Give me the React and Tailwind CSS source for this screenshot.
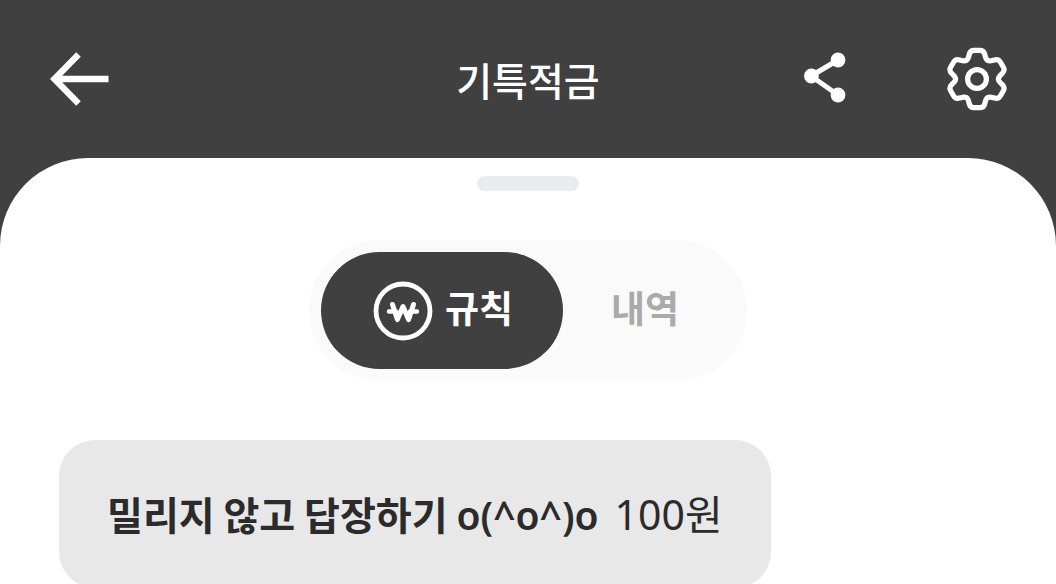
import React, { useState } from "react";

const tabs = [
  { id: "rules", label: "규칙" },
  { id: "history", label: "내역" },
];

const rules = [
  { id: 1, title: "밀리지 않고 답장하기", face: "o(^o^)o", amount: "100원" },
];

// Outline of a six tooth gear around 0,0 with rounded corners
const buildGearPath = () => {
  const tooth = [
    [-9, -19.5],
    [-6.8, -28.7],
    [6.8, -28.7],
    [9, -19.5],
  ];
  const points = [];
  for (let i = 0; i < 6; i++) {
    const a = (i * Math.PI) / 3;
    tooth.forEach(([x, y]) => {
      points.push([
        x * Math.cos(a) - y * Math.sin(a),
        x * Math.sin(a) + y * Math.cos(a),
      ]);
    });
  }
  const toward = ([x1, y1], [x2, y2], max) => {
    const len = Math.hypot(x2 - x1, y2 - y1);
    const t = Math.min(max, len / 2) / len;
    return `${(x1 + (x2 - x1) * t).toFixed(2)} ${(y1 + (y2 - y1) * t).toFixed(2)}`;
  };
  const parts = points.map((p, i) => {
    const prev = points[(i + points.length - 1) % points.length];
    const next = points[(i + 1) % points.length];
    return `${i === 0 ? "M" : "L"}${toward(p, prev, 4)} Q${p[0].toFixed(2)} ${p[1].toFixed(2)} ${toward(p, next, 4)}`;
  });
  return `${parts.join(" ")} Z`;
};

const gearPath = buildGearPath();

const BackIcon = () => (
  <svg width="60" height="56" viewBox="0 0 60 56" fill="none" aria-hidden="true">
    <path
      d="M29.5 3.5L5.5 28L29.5 52.5M6 28H59.5"
      stroke="currentColor"
      strokeWidth="6.4"
    />
  </svg>
);

const ShareIcon = () => (
  <svg width="42" height="56" viewBox="0 0 42 56" fill="none" aria-hidden="true">
    <path d="M34 9L7 25L34 44" stroke="currentColor" strokeWidth="5" />
    <circle cx="34" cy="9" r="7.4" fill="currentColor" />
    <circle cx="7.4" cy="25" r="7.4" fill="currentColor" />
    <circle cx="34" cy="44" r="7.4" fill="currentColor" />
  </svg>
);

const SettingsIcon = () => (
  <svg
    width="60"
    height="64"
    viewBox="-30 -32 60 64"
    fill="none"
    stroke="currentColor"
    strokeWidth="5.2"
    aria-hidden="true"
  >
    <path d={gearPath} strokeLinejoin="round" />
    <circle r="9.4" />
  </svg>
);

const WonIcon = () => (
  <svg
    width="60"
    height="60"
    viewBox="-30 -30 60 60"
    fill="none"
    stroke="currentColor"
    strokeLinecap="round"
    strokeLinejoin="round"
    aria-hidden="true"
  >
    <circle r="27" strokeWidth="4.8" />
    <path d="M-10.5 -6.5L-5.6 8.6L0 -4.5L5.6 8.6L10.5 -6.5" strokeWidth="5" />
    <path d="M-14 0.5H-7M7 0.5H14" strokeWidth="4.4" />
  </svg>
);

const Header = () => (
  <header className="grid grid-cols-[1fr_auto_1fr] items-center px-[49px] h-[158px] text-white">
    <button type="button" aria-label="뒤로" className="justify-self-start">
      <BackIcon />
    </button>
    <h1 className="text-[39px] leading-[56px] font-medium">기특적금</h1>
    <div className="flex items-center justify-self-end gap-[101px]">
      <button type="button" aria-label="공유">
        <ShareIcon />
      </button>
      <button type="button" aria-label="설정">
        <SettingsIcon />
      </button>
    </div>
  </header>
);

const TabSwitch = ({ active, onChange }) => (
  <div role="tablist" className="flex p-3 rounded-full bg-[#fafafa]">
    {tabs.map((tab) => (
      <button
        key={tab.id}
        type="button"
        role="tab"
        aria-selected={active === tab.id}
        onClick={() => onChange(tab.id)}
        className={`flex items-center gap-3 h-[117px] rounded-full text-[37px] leading-[56px] font-bold ${
          active === tab.id
            ? "pl-[52px] pr-[50px] bg-[#404040] text-white"
            : "pl-12 pr-14 text-[#aaaaaa]"
        }`}
      >
        {active === tab.id && <WonIcon />}
        <span className="pb-2">{tab.label}</span>
      </button>
    ))}
  </div>
);

const RuleCard = ({ rule }) => (
  <li className="flex items-center gap-4 w-fit h-[148px] px-12 rounded-[36px] bg-[#e8e8e8] text-[39px] leading-[56px] text-[#2b2b2b] whitespace-nowrap">
    <strong className="font-bold">
      {rule.title}{" "}
      <span className="font-['Noto_Sans',sans-serif] font-semibold">
        {rule.face}
      </span>
    </strong>
    <span className="font-['Noto_Sans','Noto_Sans_CJK_KR',sans-serif] text-[41px]">
      {rule.amount}
    </span>
  </li>
);

const App = () => {
  const [activeTab, setActiveTab] = useState("rules");

  return (
    <div className="flex flex-col h-screen overflow-hidden bg-[#404040] font-['Noto_Sans_CJK_KR',sans-serif]">
      <Header />
      <main className="flex flex-col items-center flex-1 min-h-0 pt-[18px] rounded-t-[88px] bg-white">
        <div className="shrink-0 w-[102px] h-[15px] rounded-full bg-[#e9ebef]" />
        <div className="mt-[49px]">
          <TabSwitch active={activeTab} onChange={setActiveTab} />
        </div>
        <ul className="self-stretch px-[59px] mt-[59px]">
          {activeTab === "rules" &&
            rules.map((rule) => <RuleCard key={rule.id} rule={rule} />)}
        </ul>
      </main>
    </div>
  );
};

export default App;
